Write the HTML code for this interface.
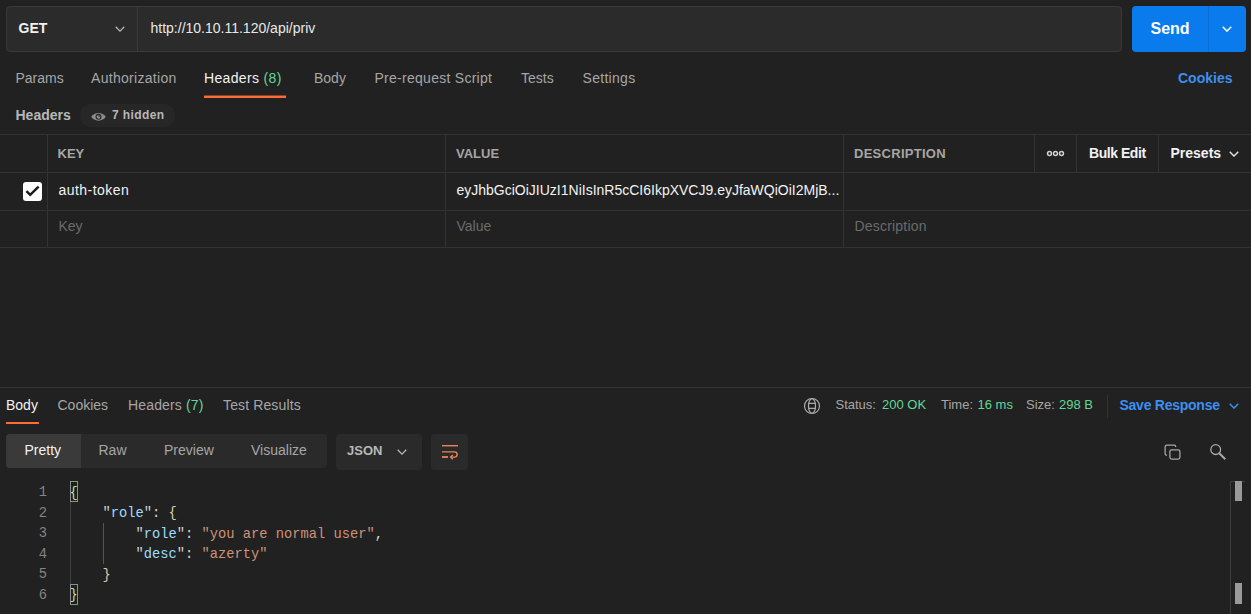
<!DOCTYPE html>
<html><head><meta charset="utf-8"><style>
html,body{margin:0;padding:0;}
body{width:1251px;height:614px;overflow:hidden;background:#212121;position:relative;font-family:"Liberation Sans",sans-serif;}
.t{position:absolute;white-space:nowrap;line-height:1;}
.r{position:absolute;}
</style></head><body>
<div class="r" style="left:6px;top:6px;width:1116px;height:46px;background:#2b2b2b;border:1px solid #3a3a3a;border-radius:4px;box-sizing:border-box"></div>
<div class="r" style="left:137px;top:7px;width:1px;height:44px;background:#3a3a3a;"></div>
<div class="t" style="left:18.5px;top:21.15px;font-size:14px;color:#f2f2f2;font-weight:700;">GET</div>
<svg class="r" style="left:115px;top:26px" width="10" height="6" viewBox="0 0 10 6"><path d="M0.7 0.7 L5.0 5.1 L9.3 0.7" fill="none" stroke="#b8b8b8" stroke-width="1.25"/></svg>
<div class="t" style="left:150.5px;top:21.15px;font-size:14px;color:#e8e8e8;font-weight:400;">http://10.10.11.120/api/priv</div>
<div class="r" style="left:1132px;top:6px;width:114px;height:46px;background:#097bed;border-radius:4px"></div>
<div class="r" style="left:1208px;top:6px;width:1px;height:46px;background:#0a6ed4;"></div>
<div class="t" style="left:1150.5px;top:21.46px;font-size:16px;color:#ffffff;font-weight:700;">Send</div>
<svg class="r" style="left:1222px;top:26px" width="10" height="6" viewBox="0 0 10 6"><path d="M0.7 0.7 L5.0 5.1 L9.3 0.7" fill="none" stroke="#ffffff" stroke-width="1.45"/></svg>
<div class="t" style="left:15.5px;top:71.15px;font-size:14px;color:#a6a6a6;font-weight:400;">Params</div>
<div class="t" style="left:91px;top:71.15px;font-size:14px;color:#a6a6a6;font-weight:400;letter-spacing:0.3px">Authorization</div>
<div class="t" style="left:204px;top:71.15px;font-size:14px;color:#f2f2f2;font-weight:400;letter-spacing:0.35px">Headers <span style="color:#62d898">(8)</span></div>
<div class="r" style="left:204px;top:95px;width:82px;height:1px;background:rgba(255,108,55,0.45);"></div>
<div class="r" style="left:204px;top:96px;width:82px;height:2px;background:#ff6c37;"></div>
<div class="t" style="left:314px;top:71.15px;font-size:14px;color:#a6a6a6;font-weight:400;">Body</div>
<div class="t" style="left:374.5px;top:71.15px;font-size:14px;color:#a6a6a6;font-weight:400;letter-spacing:0.27px">Pre-request Script</div>
<div class="t" style="left:521px;top:71.15px;font-size:14px;color:#a6a6a6;font-weight:400;">Tests</div>
<div class="t" style="left:582.5px;top:71.15px;font-size:14px;color:#a6a6a6;font-weight:400;letter-spacing:0.3px">Settings</div>
<div class="t" style="left:1178px;top:71.15px;font-size:14px;color:#3d8ff0;font-weight:700;">Cookies</div>
<div class="t" style="left:15.5px;top:108.15px;font-size:14px;color:#b8b8b8;font-weight:700;">Headers</div>
<div class="r" style="left:80px;top:104px;width:95px;height:23px;background:#272727;border-radius:12px"></div>
<svg class="r" style="left:90.5px;top:111.5px" width="15" height="10" viewBox="0 0 15 10"><path d="M0.3 4.8 C3 -0.3 12 -0.3 14.7 4.8 C12 9.9 3 9.9 0.3 4.8Z" fill="#8c8c8c"/><circle cx="7.5" cy="4.8" r="3" fill="#262626"/><circle cx="7.5" cy="4.8" r="1.9" fill="#8c8c8c"/><path d="M7.5 4.8 V2.9 A1.9 1.9 0 0 1 9.4 4.8Z" fill="#3a3a3a"/></svg>
<div class="t" style="left:112px;top:108.84px;font-size:12px;color:#b8b8b8;font-weight:700;letter-spacing:0.4px">7 hidden</div>
<div class="r" style="left:0px;top:134px;width:1251px;height:1px;background:#333333;"></div>
<div class="r" style="left:0px;top:172px;width:1251px;height:1px;background:#333333;"></div>
<div class="r" style="left:0px;top:210px;width:1251px;height:1px;background:#333333;"></div>
<div class="r" style="left:0px;top:247px;width:1251px;height:1px;background:#333333;"></div>
<div class="r" style="left:47px;top:134px;width:1px;height:113px;background:#333333;"></div>
<div class="r" style="left:445px;top:134px;width:1px;height:113px;background:#333333;"></div>
<div class="r" style="left:843px;top:134px;width:1px;height:113px;background:#333333;"></div>
<div class="r" style="left:1034px;top:134px;width:1px;height:38px;background:#333333;"></div>
<div class="r" style="left:1076px;top:134px;width:1px;height:38px;background:#333333;"></div>
<div class="r" style="left:1158px;top:134px;width:1px;height:38px;background:#333333;"></div>
<div class="t" style="left:57.5px;top:147.00px;font-size:13px;color:#a6a6a6;font-weight:700;">KEY</div>
<div class="t" style="left:456px;top:147.00px;font-size:13px;color:#a6a6a6;font-weight:700;">VALUE</div>
<div class="t" style="left:854px;top:147.00px;font-size:13px;color:#a6a6a6;font-weight:700;letter-spacing:0.28px">DESCRIPTION</div>
<svg class="r" style="left:1046px;top:149px" width="19" height="9" viewBox="0 0 19 9"><g fill="none" stroke="#d0d0d0" stroke-width="1.5"><circle cx="3.5" cy="4.5" r="1.95"/><circle cx="9.5" cy="4.5" r="1.95"/><circle cx="15.5" cy="4.5" r="1.95"/></g></svg>
<div class="t" style="left:1089px;top:146.15px;font-size:14px;color:#f2f2f2;font-weight:700;letter-spacing:-0.45px">Bulk Edit</div>
<div class="t" style="left:1170.5px;top:146.15px;font-size:14px;color:#f2f2f2;font-weight:700;">Presets</div>
<svg class="r" style="left:1229px;top:151px" width="10" height="6" viewBox="0 0 10 6"><path d="M0.7 0.7 L5.0 5.1 L9.3 0.7" fill="none" stroke="#e0e0e0" stroke-width="1.4"/></svg>
<div class="r" style="left:22.5px;top:181.5px;width:19px;height:19px;background:#ffffff;border-radius:3px"></div>
<svg class="r" style="left:22.5px;top:181.5px" width="19" height="19" viewBox="0 0 19 19"><path d="M3.4 9.1 L7.2 12.8 L15.6 4.6" fill="none" stroke="#1a1a1a" stroke-width="2.5"/></svg>
<div class="t" style="left:58.5px;top:183.15px;font-size:14px;color:#f2f2f2;font-weight:400;letter-spacing:0.45px">auth-token</div>
<div class="t" style="left:456.5px;top:183.15px;font-size:14px;color:#f2f2f2;font-weight:400;">eyJhbGciOiJIUzI1NiIsInR5cCI6IkpXVCJ9.eyJfaWQiOiI2MjB...</div>
<div class="t" style="left:58.5px;top:219.15px;font-size:14px;color:#6b6b6b;font-weight:400;">Key</div>
<div class="t" style="left:456.5px;top:219.15px;font-size:14px;color:#6b6b6b;font-weight:400;">Value</div>
<div class="t" style="left:854.5px;top:219.15px;font-size:14px;color:#6b6b6b;font-weight:400;letter-spacing:0.2px">Description</div>
<div class="r" style="left:0px;top:387px;width:1251px;height:1px;background:#333333;"></div>
<div class="t" style="left:6px;top:398.15px;font-size:14px;color:#f2f2f2;font-weight:400;">Body</div>
<div class="r" style="left:6px;top:422px;width:33px;height:2px;background:#ff6c37;"></div>
<div class="t" style="left:57.5px;top:398.15px;font-size:14px;color:#a6a6a6;font-weight:400;">Cookies</div>
<div class="t" style="left:128px;top:398.15px;font-size:14px;color:#a6a6a6;font-weight:400;letter-spacing:0.15px">Headers <span style="color:#62d898">(7)</span></div>
<div class="t" style="left:223px;top:398.15px;font-size:14px;color:#a6a6a6;font-weight:400;letter-spacing:0.13px">Test Results</div>
<svg class="r" style="left:803px;top:397px" width="18" height="18" viewBox="0 0 18 18"><g fill="none" stroke="#ababab" stroke-width="1.2"><circle cx="9" cy="9" r="7.5"/><path d="M9 1.5 C6.3 2.6 5.5 5.2 5.5 9 C5.5 12.8 6.3 15.4 9 16.5 M9 1.5 C11.7 2.6 12.5 5.2 12.5 9 C12.5 12.8 11.7 15.4 9 16.5"/><path d="M5.5 6.4 H12.5 M5.5 11.4 H12.5"/></g></svg>
<div class="t" style="left:835.5px;top:398.00px;font-size:13px;color:#a6a6a6;font-weight:400;">Status:</div>
<div class="t" style="left:882px;top:398.00px;font-size:13px;color:#62d898;font-weight:400;">200 OK</div>
<div class="t" style="left:941px;top:398.00px;font-size:13px;color:#a6a6a6;font-weight:400;">Time:</div>
<div class="t" style="left:977.5px;top:398.00px;font-size:13px;color:#62d898;font-weight:400;">16 ms</div>
<div class="t" style="left:1026px;top:398.00px;font-size:13px;color:#a6a6a6;font-weight:400;">Size:</div>
<div class="t" style="left:1059px;top:398.00px;font-size:13px;color:#62d898;font-weight:400;">298 B</div>
<div class="r" style="left:1107px;top:395px;width:1px;height:23px;background:#333333;"></div>
<div class="t" style="left:1119.5px;top:398.15px;font-size:14px;color:#3d8ff0;font-weight:700;letter-spacing:-0.25px">Save Response</div>
<svg class="r" style="left:1229px;top:403px" width="10" height="6" viewBox="0 0 10 6"><path d="M0.7 0.7 L5.0 5.1 L9.3 0.7" fill="none" stroke="#3d8ff0" stroke-width="1.4"/></svg>
<div class="r" style="left:6px;top:434px;width:321px;height:34px;background:#2a2a2a;border-radius:4px"></div>
<div class="r" style="left:6px;top:434px;width:75px;height:34px;background:#3a3a3a;border-radius:4px 0 0 4px"></div>
<div class="t" style="left:24.5px;top:443.15px;font-size:14px;color:#f2f2f2;font-weight:400;">Pretty</div>
<div class="t" style="left:98.5px;top:443.15px;font-size:14px;color:#a6a6a6;font-weight:400;">Raw</div>
<div class="t" style="left:164px;top:443.15px;font-size:14px;color:#a6a6a6;font-weight:400;">Preview</div>
<div class="t" style="left:251px;top:443.15px;font-size:14px;color:#a6a6a6;font-weight:400;">Visualize</div>
<div class="r" style="left:336px;top:434px;width:86px;height:36px;background:#2a2a2a;border-radius:4px"></div>
<div class="t" style="left:347px;top:444.00px;font-size:13px;color:#b8b8b8;font-weight:700;">JSON</div>
<svg class="r" style="left:397px;top:449px" width="10" height="6" viewBox="0 0 10 6"><path d="M0.7 0.7 L5.0 5.1 L9.3 0.7" fill="none" stroke="#b8b8b8" stroke-width="1.25"/></svg>
<div class="r" style="left:431px;top:434px;width:37px;height:36px;background:#2a2a2a;border-radius:4px"></div>
<svg class="r" style="left:441px;top:444px" width="18" height="16" viewBox="0 0 18 16"><g fill="none" stroke="#e8845a" stroke-width="1.4"><path d="M1 1.7 H17"/><path d="M1 7.9 H13.5 A2.6 2.6 0 0 1 13.5 13.1 H10"/><path d="M11.8 10.9 L9.6 13.1 L11.8 15.3"/><path d="M1 13 H7" stroke-width="1.8"/></g></svg>
<svg class="r" style="left:1163px;top:443px" width="19" height="18" viewBox="0 0 19 18"><g fill="none" stroke="#a8a8a8" stroke-width="1.25"><path d="M3.9 12.3 A1.8 1.8 0 0 1 2.1 10.5 V3.9 A1.8 1.8 0 0 1 3.9 2.1 H11 A1.8 1.8 0 0 1 12.8 3.9"/><rect x="6.9" y="6.8" width="10" height="9.2" rx="1.8"/></g></svg>
<svg class="r" style="left:1209px;top:443px" width="18" height="18" viewBox="0 0 18 18"><g fill="none" stroke="#a8a8a8"><circle cx="6.7" cy="6.6" r="4.9" stroke-width="1.3"/><path d="M10.3 10.2 L16.3 16.2" stroke-width="2"/></g></svg>
<div class="r" style="left:20px;top:483px;width:27px;text-align:right;font-family:'Liberation Mono';font-size:13.75px;line-height:20.6px;color:#858585"><div style="height:20.6px">1</div><div style="height:20.6px">2</div><div style="height:20.6px">3</div><div style="height:20.6px">4</div><div style="height:20.6px">5</div><div style="height:20.6px">6</div></div>
<div class="r" style="left:70px;top:481px;width:8px;height:21px;background:#11251a;border:1px solid #8f8f8f;box-sizing:border-box"></div>
<div class="r" style="left:70px;top:584px;width:8px;height:21px;background:#11251a;border:1px solid #8f8f8f;box-sizing:border-box"></div>
<div class="r" style="left:70px;top:502px;width:1px;height:82px;background:#404040;"></div>
<div class="r" style="left:103px;top:523px;width:1px;height:41px;background:#555555;"></div>
<div class="r" style="left:69.5px;top:483.5px;font-family:'Liberation Mono';font-size:13.75px;line-height:20.6px;color:#d4d4d4"><div style="height:20.6px;white-space:pre"><span style="color:#d8d0a8">{</span></div><div style="height:20.6px;white-space:pre">    <span style="color:#d4d4d4">"</span><span style="color:#9cdcfe">role</span><span style="color:#d4d4d4">"</span><span style="color:#d4d4d4">: </span><span style="color:#d8d0a8">{</span></div><div style="height:20.6px;white-space:pre">        <span style="color:#d4d4d4">"</span><span style="color:#9cdcfe">role</span><span style="color:#d4d4d4">"</span><span style="color:#d4d4d4">: </span><span style="color:#ce9178">"you are normal user"</span><span style="color:#d4d4d4">,</span></div><div style="height:20.6px;white-space:pre">        <span style="color:#d4d4d4">"</span><span style="color:#9cdcfe">desc</span><span style="color:#d4d4d4">"</span><span style="color:#d4d4d4">: </span><span style="color:#ce9178">"azerty"</span></div><div style="height:20.6px;white-space:pre">    <span style="color:#d8d0a8">}</span></div><div style="height:20.6px;white-space:pre"><span style="color:#d8d0a8">}</span></div></div>
<div class="r" style="left:1230px;top:481px;width:1px;height:133px;background:#3d3d3d;"></div>
<div class="r" style="left:1230px;top:481px;width:15px;height:1px;background:#3d3d3d;"></div>
<div class="r" style="left:1235px;top:481px;width:7px;height:20px;background:#9a9a9a;"></div>
<div class="r" style="left:1235px;top:583px;width:7px;height:21px;background:#9a9a9a;"></div>
</body></html>
